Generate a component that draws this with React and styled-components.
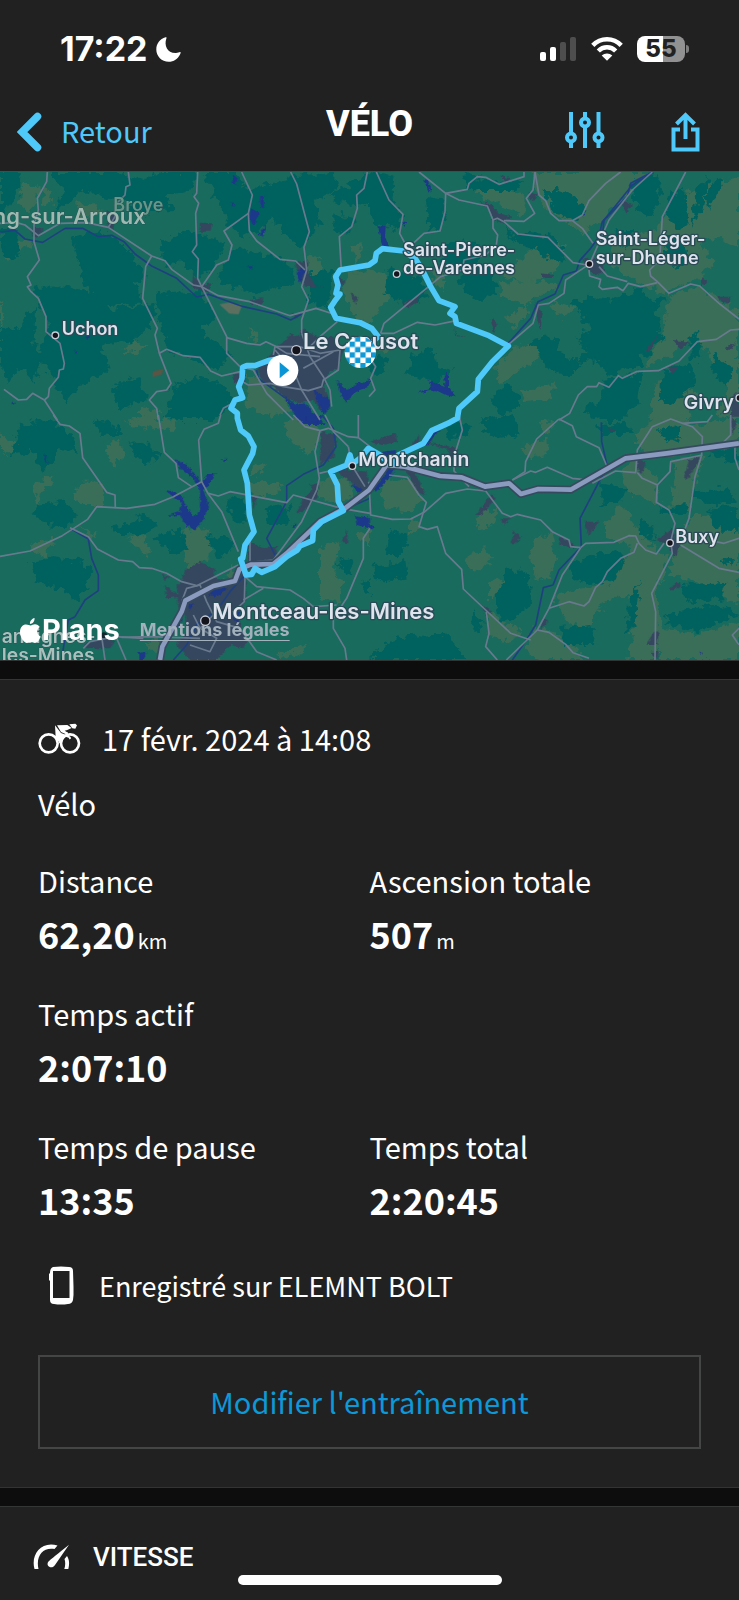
import React from "react";
import styled, { createGlobalStyle } from "styled-components";

const GlobalStyle = createGlobalStyle`
    * {
        box-sizing: border-box;
    }
    body {
        margin: 0;
        background-color: #212121;
        color: #ffffff;
        font-family: "Noto Sans CJK SC", "Noto Sans", sans-serif;
        font-size: 29px;
        line-height: 40px;
    }
`;

const Screen = styled.div`
    display: flex;
    flex-direction: column;
    min-height: 100vh;
`;

const StatusBar = styled.div`
    display: flex;
    justify-content: space-between;
    align-items: center;
    padding: 29px 50px 23px 60px;
`;

const StatusGroup = styled.div`
    display: flex;
    align-items: center;
    gap: ${(props) => props.$gap};
`;

const Clock = styled.span`
    font-family: Inter, sans-serif;
    font-size: 34px;
    font-weight: 700;
`;

const Battery = styled.div`
    display: flex;
    align-items: center;
    gap: 1px;
    &::after {
        content: "";
        width: 3px;
        height: 8px;
        border-radius: 0 3px 3px 0;
        background-color: #7d7d7d;
    }
`;

const BatteryLevel = styled.div`
    width: 48px;
    border-radius: 8px;
    background: linear-gradient(to right, #ffffff 55%, #919191 55%);
    color: #212121;
    font-family: Inter, sans-serif;
    font-size: 24px;
    font-weight: 800;
    line-height: 26px;
    text-align: center;
`;

const NavBar = styled.header`
    display: grid;
    grid-template-columns: 1fr auto 1fr;
    align-items: center;
    height: 80px;
    border-bottom: 1px solid #4a4a4a;
`;

const BackButton = styled.button`
    display: flex;
    align-items: flex-start;
    gap: 18px;
    padding: 0 0 0 17px;
    border: none;
    background: none;
    color: #4fc9fa;
    font-family: inherit;
    font-size: inherit;
    line-height: 36px;
    cursor: pointer;
`;

const PageTitle = styled.h1`
    margin: 0;
    padding-bottom: 16px;
    font-family: Roboto, sans-serif;
    font-size: 36px;
    font-weight: 800;
    line-height: 44px;
`;

const NavActions = styled.div`
    display: flex;
    justify-content: flex-end;
    gap: 65px;
    padding-right: 39px;
`;

const IconButton = styled.button`
    display: flex;
    padding: 0;
    border: none;
    background: none;
    color: #4fc9fa;
    cursor: pointer;
`;

const MapContainer = styled.div`
    position: relative;
    overflow: hidden;
    background-color: #196b5e;
`;

const MapDrawing = styled.svg`
    display: block;
    width: 100%;
    height: auto;
`;

const labelSizes = { small: "54px", medium: "58px", large: "66px" };

const PlaceLabel = styled.text`
    font-family: Inter, sans-serif;
    font-size: ${(props) => labelSizes[props.$size]};
    font-weight: 600;
    fill: ${(props) => props.$color || "#dfe3ee"};
    stroke: #2a4a55;
    stroke-width: ${(props) => (props.$color ? "2px" : "8px")};
    stroke-linejoin: round;
    paint-order: stroke;
`;

const MapCredits = styled.div`
    position: absolute;
    left: 20px;
    bottom: 12px;
    display: flex;
    align-items: center;
    gap: 20px;
    font-family: Inter, sans-serif;
`;

const MapBrand = styled.span`
    display: flex;
    align-items: center;
    gap: 1px;
    font-size: 29px;
    font-weight: 700;
    line-height: 36px;
`;

const LegalLink = styled.a`
    color: #a3b1bd;
    font-size: 18px;
    font-weight: 700;
    line-height: 24px;
    text-underline-offset: 4px;
`;

const Separator = styled.div`
    height: 20px;
    border-top: 1px solid #333333;
    border-bottom: 1px solid #333635;
    background-color: #0d0d0d;
`;

const Summary = styled.main`
    display: flex;
    flex-direction: column;
    padding: 38px;
`;

const WorkoutDate = styled.div`
    display: flex;
    align-items: center;
    gap: 21px;
`;

const WorkoutName = styled.div`
    margin-top: 25px;
`;

const StatGrid = styled.dl`
    display: grid;
    grid-template-columns: 1fr 1fr;
    row-gap: 34px;
    margin: 37px 0 41px;
`;

const StatItem = styled.div`
    grid-column-end: ${(props) => (props.$wide ? "span 2" : "auto")};
`;

const StatLabel = styled.dt`
    padding-bottom: 7px;
`;

const StatValue = styled.dd`
    margin: 0;
    font-size: 36px;
    font-weight: 700;
    line-height: 52px;
`;

const Unit = styled.span`
    padding-left: 3px;
    font-size: 20px;
    font-weight: 400;
    line-height: 20px;
`;

const Device = styled.div`
    display: flex;
    align-items: center;
    gap: 24px;
    padding-left: 10px;
    font-size: 27px;
`;

const EditButton = styled.button`
    margin-top: 49px;
    height: 94px;
    padding-bottom: 4px;
    border: 2px solid #434645;
    background: none;
    color: #0d98d8;
    font-family: inherit;
    font-size: inherit;
    cursor: pointer;
`;

const SpeedSection = styled.section`
    display: flex;
    align-items: center;
    gap: 23px;
    padding: 28px 33px 22px;
`;

const SectionTitle = styled.h2`
    margin: 0;
    font-family: Roboto, sans-serif;
    font-size: 26px;
    font-weight: 500;
    line-height: 44px;
`;

const HomeIndicator = styled.div`
    position: fixed;
    bottom: 15px;
    left: 50%;
    width: 264px;
    height: 10px;
    margin-left: -132px;
    border-radius: 5px;
    background-color: #ffffff;
`;

// The map is split in four tiles, each one has its own origin
const tiles = [
    {
        x: 0,
        y: 0,
        forest: [
            "150,6 330,6 420,30 480,6 590,6 580,60 500,80 520,120 420,130 370,90 300,80 250,60 160,130 190,60",
            "215,200 300,180 350,210 420,280 440,330 400,340 430,400 300,410 250,330 230,270",
            "0,170 60,180 50,270 10,260",
            "100,350 200,350 300,380 330,420 470,400 450,470 390,520 300,520 330,600 250,640 200,700 150,610 110,560 150,460",
            "0,470 60,480 110,400 100,520 130,560 100,640 60,590 20,640 0,560",
            "610,6 720,6 740,60 870,20 1000,6 1010,60 940,90 960,160 900,240 860,200 820,150 780,180 740,200 690,170 650,90",
            "470,370 600,360 650,440 600,480 650,520 700,560 630,600 570,560 500,540 480,460",
            "560,180 620,200 680,220 640,300 600,320 540,280 500,290 480,220",
            "930,310 1000,300 980,410 930,400",
            "700,230 860,270 880,340 760,370 650,330",
            "520,650 600,620 680,650 700,700 640,750 500,750",
            "0,6 60,6 50,80 0,130",
            "1000,130 1070,150 1050,190 1000,180",
            "980,80 1110,6 1110,90 1060,110",
            "330,650 420,620 440,690 360,720",
        ],
        field: [
            "65,40 120,50 110,90 90,130 60,100",
            "130,60 160,70 150,110 125,100",
            "230,100 290,100 300,130 240,150",
            "10,225 100,210 90,235 40,235 20,280",
            "160,510 190,525 185,575 155,560",
            "360,550 400,515 440,520 420,545",
            "710,290 740,260 745,300",
            "755,470 785,500 750,510",
            "930,250 970,280 960,310 990,335 945,340 920,300",
            "1060,230 1085,225 1080,280 1060,260",
            "1040,310 1110,300 1110,460 1070,450 1030,370",
            "740,610 770,630 850,640 870,720 820,740 740,710",
            "420,710 480,720 460,750 420,745",
            "0,380 15,430 0,480",
            "245,6 300,6 290,25",
        ],
        town: [
            "95,170 130,175 115,205 95,195",
            "600,158 635,160 632,185 598,185",
            "580,310 600,345 635,340 620,370 575,350",
            "750,390 790,385 785,405 755,405",
            "885,280 920,270 925,310 945,345 970,352 915,350 900,320",
            "320,120 345,130 340,180 325,175",
            "770,590 800,570 830,530 860,510 870,490 900,500 905,475 950,500 1000,500 1030,540 1015,590 985,610 970,650 990,700 960,720 940,690 900,700 850,680 820,650 790,640",
            "695,610 735,615 735,640 705,640",
            "1050,365 1075,385 1065,402",
            "1005,320 1035,330 1020,360",
            "870,430 905,425 890,445",
        ],
        water: [
            "700,15 713,25 708,45 697,38",
            "752,115 780,130 762,165 748,150",
            "780,80 790,80 792,115 780,110",
            "775,195 797,165 797,180 786,202",
            "692,95 705,103 700,110",
            "890,310 905,295 915,300 900,340",
            "255,495 270,498 265,510",
            "223,540 233,547 227,553",
            "35,692 44,700 38,706",
            "742,290 757,288 752,300",
            "850,675 885,705 915,700 930,718 960,745 975,765 910,765 885,735 865,705",
            "940,660 965,675 990,690 990,710 970,735 955,700",
            "1010,630 1040,660 1075,640 1110,630 1105,650 1060,670 1040,698 1025,680",
        ],
        river: [
            "0,186 45,181 75,207 128,217 195,175 248,175 295,200 335,196 372,215 405,252 455,288 530,325 590,381 625,373 730,410 830,432 872,450 905,432",
            "770,600 775,625 850,680 880,700",
        ],
        road: [
            "0,160 50,158 75,165 115,197 180,160 260,158 325,172 455,258 495,272 515,298 580,345 605,350 655,377 745,394 870,437 948,415 1000,432",
            "142,6 140,35 112,85 115,120 102,165 102,215 118,270 82,320 93,345 82,350 93,365 115,385 138,440 138,485 180,520 193,580 190,597 178,600 175,622 148,655 145,680 133,690",
            "385,6 390,45 378,50 375,75 345,105 345,140 325,172",
            "593,6 590,70 582,80 596,100 587,130 590,225 577,245 595,267 593,325 605,350",
            "725,6 757,75 745,130 672,183 696,225 685,270 650,285 605,350 680,500 680,550 720,590",
            "745,130 748,182 770,213 840,268 887,273 915,300",
            "872,6 890,42 928,185 912,232 920,300 905,350 925,390 905,450 905,490",
            "1102,6 1092,55 1070,75 1072,115 1055,170 1018,200 1024,300",
            "455,258 437,290 428,385 472,475 465,495 478,550 513,640 500,660 470,665 448,690 470,715 475,750",
            "478,550 500,538 550,557 600,562 632,603 665,618 720,605",
            "680,503 740,520 780,525 798,515 825,528 860,550 960,560",
            "12,658 55,690 80,688 98,670 133,690 172,750",
            "1012,455 960,500 930,530",
            "820,555 825,530 900,530 960,550 1020,540 1015,600 970,630 965,650 925,662 850,650 810,640 745,645 718,630",
            "905,490 930,560 970,620 990,660 995,710",
            "720,590 760,600 800,670 880,750",
            "825,540 880,600 905,660 960,750",
            "1000,545 910,595",
            "728,683 670,715 660,735",
        ],
    },
    {
        x: 1107,
        y: 0,
        forest: [
            "0,6 80,20 70,80 100,130 80,180 20,160 0,120",
            "170,80 230,90 220,170 180,190",
            "280,6 380,40 460,30 440,60 360,60 300,60",
            "390,130 430,190 540,195 600,260 560,280 500,240 430,210",
            "520,60 560,130 620,150 650,120 620,80 560,60",
            "240,210 330,220 330,280 270,300 220,270",
            "60,290 160,330 180,380 100,400 50,370",
            "300,280 370,290 380,370 320,390 260,340",
            "660,380 740,390 760,370 790,380 800,350 850,390 890,380 850,430 880,440 870,490 890,510 850,520 850,560 810,560 820,600 760,590 720,620 690,580 620,570 650,540 620,500 660,480 640,430 600,400",
            "490,510 560,500 570,540 640,580 600,620 540,600 510,560",
            "700,630 820,610 810,700 750,750 690,750 640,720 700,690",
            "780,40 860,10 880,50 850,140 810,130",
            "900,80 940,50 960,150 930,180 890,140",
            "980,60 1020,20 1000,120 970,170",
            "1040,20 1060,40 1020,120 1010,80",
            "900,200 950,210 960,270 920,300 890,250",
            "880,600 960,580 980,640 920,700 870,690",
            "1040,550 1090,600 1070,650 1030,610",
            "130,560 190,530 210,590 250,600 200,640 110,610",
            "360,680 420,640 460,700 400,740",
            "0,540 50,570 40,620 0,600",
            "740,180 790,180 780,240 740,210",
            "960,500 990,480 1000,550 970,580",
        ],
        field: [
            "490,6 850,6 800,60 740,100 700,160 640,190 590,150 530,120 500,60",
            "340,50 420,60 470,90 460,140 380,100 320,70",
            "520,200 590,230 560,300 480,340 400,320 460,260",
            "390,340 500,330 570,350 470,400 400,380",
            "720,210 860,180 900,110 960,60 1110,20 1110,240 1050,200 990,220 1040,280 980,330 880,370 790,330 730,290",
            "900,380 990,350 1110,430 1110,740 1040,740 1080,660 1010,540 960,510 900,560 830,590 880,500",
            "860,640 940,620 990,680 960,750 840,750",
            "430,540 530,500 500,570 450,600 390,640 380,590",
            "0,300 50,310 60,370 20,440 0,460",
            "180,300 230,310 220,360 200,340",
            "710,490 780,470 790,530 740,540",
            "550,400 620,410 590,440 560,430",
            "410,450 470,400 480,430 440,470",
            "30,530 70,520 60,550",
            "460,660 560,640 540,690 470,700",
        ],
        town: [
            "330,95 370,105 390,130 430,140 400,158 370,150 365,120",
            "395,15 420,25 415,38",
            "480,65 505,75 495,90 478,85",
            "640,265 700,270 705,305 680,315 650,290",
            "765,90 790,105 772,130 762,110",
            "515,310 553,315 548,325 520,322",
            "500,400 520,430 515,480 505,450",
            "365,445 385,460 375,488",
            "255,470 265,495 295,503 262,498",
            "1000,325 1015,335 995,350",
            "1045,380 1090,380 1080,400 1055,395",
            "910,510 965,515 935,540",
            "895,590 928,590 912,612",
            "1090,680 1110,660 1110,740 1085,740",
            "100,400 155,375 145,395 115,415",
            "825,550 865,495 850,535",
            "1065,535 1100,520 1085,540",
        ],
        water: [
            "165,28 178,30 185,68 172,50",
            "27,165 50,170 48,200 60,232 40,230",
            "98,155 112,160 105,168",
            "145,670 190,650 175,630 225,650 228,612 240,618 240,655 262,682 230,675 200,660",
            "640,130 650,138 642,142",
            "0,630 10,625 0,640",
        ],
        river: [
            "850,6 785,40 775,80 700,155 690,200 665,235 632,272 622,303 583,315 558,372 507,395 485,445 418,520",
            "845,12 790,45 705,150 702,180",
        ],
        road: [
            "22,6 60,90 102,133 92,190 108,220",
            "150,6 230,70 270,90 355,108 372,150 385,145 405,155 447,192 537,202 612,278 655,285",
            "230,70 228,125 213,183 165,190 135,218",
            "230,70 295,58 300,40 325,20 350,22 390,43 465,20 465,6",
            "498,6 492,60 472,85 497,130 465,154 405,152",
            "498,6 510,75 530,92 545,130 570,152 610,152 640,175 672,220",
            "755,6 710,40 660,92 640,135 610,152",
            "850,6 790,60 720,150 665,275 650,290 590,330 585,370 540,400 508,405 492,460 420,522",
            "950,6 880,140 872,270 842,300 845,318 865,335 900,370 965,342 992,348 1050,400 1110,447",
            "660,300 662,318 695,328 690,350 700,358 745,352 762,362 778,340 815,350 865,338",
            "690,290 715,318 775,335",
            "372,150 372,175 386,195 382,225 350,255 285,270 280,300 215,320 45,460 35,490",
            "35,490 75,490 145,457 198,465 262,452",
            "1110,478 1085,480 1042,508 985,515 930,573 868,602 805,604 760,625 748,617 720,652 690,638 683,650 655,650 628,675 602,730 570,750",
            "0,560 20,590 5,625 18,660 0,680",
        ],
    },
    {
        x: 0,
        y: 735,
        forest: [
            "60,30 150,10 220,70 240,110 180,100 130,170 100,110 30,120",
            "110,270 190,260 230,300 200,340 150,330 100,300",
            "90,440 160,430 250,440 280,470 230,560 180,520 110,500",
            "340,340 440,300 480,330 430,360 360,360",
            "460,370 540,340 570,400 520,420",
            "380,90 440,80 480,120 440,150",
            "620,360 690,370 700,400 650,430",
            "680,260 730,250 740,310 700,320",
            "1010,440 1050,430 1060,480 1030,470",
            "1080,500 1110,490 1110,540",
            "280,10 350,30 370,60 310,60",
            "800,280 870,270 860,330 800,320",
        ],
        field: [
            "0,60 50,80 20,120 0,100",
            "310,90 360,80 370,110 350,150 330,140",
            "215,230 250,200 310,200 310,270 270,270 240,270",
            "100,210 160,180 150,210 110,240 130,300 100,260",
            "370,20 440,10 530,20 520,45 440,40",
            "550,350 610,340 640,370 620,440 560,470",
            "385,370 420,360 460,410 440,420",
            "95,390 160,370 140,430 100,410",
            "850,40 870,10 950,20 960,60 930,120 880,90",
            "740,200 850,205 830,240 780,240 740,230",
            "760,150 800,145 770,180 745,195",
            "960,200 1040,180 1060,230 1040,260 950,255",
            "960,400 1020,380 1000,480 1030,500 1020,560 960,550",
            "580,710 640,700 660,735 570,735",
            "830,715 930,695 900,715 840,730",
            "440,690 480,660 480,730",
            "230,340 290,350 280,370",
            "670,490 700,450 700,490",
            "1070,360 1110,340 1110,400",
        ],
        town: [
            "530,510 545,495 555,465 600,440 645,465 640,490 690,500 700,490 735,475 740,540 730,570 715,600 725,640 740,680 730,700 690,690 650,735 570,735 530,690 560,650 555,600 535,570",
            "495,510 540,545 500,550",
            "485,480 510,485 495,495",
            "745,380 790,400 830,395 830,430 800,435 745,445",
            "960,50 1010,60 1000,130 960,150",
            "1000,160 1060,165 1100,170 1110,230 1090,250 1050,200",
            "890,290 910,250 945,215 950,245 905,295",
            "250,690 310,665 345,680 330,700 260,700",
            "755,245 770,250 760,285",
            "1025,380 1040,345 1045,385",
            "930,210 955,205 950,240",
        ],
        water: [
            "525,132 560,150 605,205 620,180 648,175 625,210 610,225 628,275 605,320 585,347 550,320 540,300 500,303 540,290 545,265 500,230 505,222 545,245 560,280 580,305 600,290 600,225 580,190 545,165",
            "130,118 138,122 143,145 136,138",
            "665,133 680,131 673,138",
            "915,0 975,0 950,22 920,20",
            "625,540 650,515 680,520 650,545",
            "565,570 580,565 570,590",
            "875,335 890,328 885,342",
            "1065,300 1110,310 1110,340 1070,330",
            "1055,210 1075,215 1095,235 1070,230",
            "415,715 440,710 430,735 415,735",
            "690,600 720,590 715,625",
            "520,620 545,610 540,640",
        ],
        river: [
            "210,340 265,372 275,430 295,480 295,527 255,555 225,605 205,615 190,700 185,735",
            "965,0 1000,40 1008,95 970,150 910,178 860,212 860,260 800,370 825,420",
            "735,480 690,530 655,580 590,630 560,690 520,735",
            "1030,285 1110,250",
        ],
        road: [
            "160,0 180,28 208,33 240,55 248,128 320,232 345,240 346,280",
            "475,0 493,112 528,145 535,188 575,215",
            "662,0 655,25 612,43 596,75 605,200 625,237 665,290 715,410",
            "605,200 520,245 465,268 380,280 290,275 263,313 187,362 90,408 0,424",
            "210,338 265,365 292,402 355,435 398,440 418,458 455,460 500,475 545,500 590,512 715,450",
            "625,235 655,243 690,230 860,263 880,240 1025,280 1110,295",
            "750,450 750,370",
            "880,0 915,35 960,47 985,40 1045,65 1075,68",
            "960,47 945,110 958,190 950,225 905,320 850,395 820,435",
            "958,175 1000,165",
            "975,0 1000,50 1045,95",
            "1045,95 1055,150 1095,215",
            "1075,0 1075,68 1110,95",
            "735,485 770,515 870,525 910,550 940,575 1010,570",
            "735,485 733,560 700,590 640,600 600,640",
            "790,520 730,555",
            "545,560 560,520 600,510 620,560 650,620 720,640 770,710 830,735",
            "365,667 450,665 600,670",
            "305,665 315,735",
            "350,670 378,735",
            "250,700 270,680 345,665 430,670",
            "570,690 630,710 650,670 600,640 580,600",
            "1110,340 1090,370 1090,430 1040,550 1000,610 1000,640 1035,700 1040,735",
            "770,440 820,435 840,425",
        ],
    },
    {
        x: 1107,
        y: 735,
        forest: [
            "330,20 430,0 450,60 380,70",
            "680,30 770,20 790,60 700,60",
            "870,40 930,30 930,70 890,85",
            "1020,110 1110,90 1110,140 1060,130",
            "700,210 780,220 760,260 700,270",
            "970,230 1080,220 1100,260 1020,270 970,250",
            "1015,290 1070,270 1110,290 1110,350 1050,350",
            "60,350 120,360 100,420 50,420",
            "20,450 110,440 120,480 60,505 20,490",
            "380,540 420,460 470,470 490,560 440,610 390,620",
            "600,450 690,410 770,420 740,500 680,510 610,490",
            "940,510 1070,500 1060,550 1000,560 940,550",
            "890,600 970,580 1060,570 1110,600 1060,620 980,650 900,630",
            "130,650 180,670 200,650 250,670 290,735 0,735 40,690",
            "310,590 340,610 330,650 305,640",
            "570,640 670,630 680,690 590,690",
            "780,570 810,500 800,610 770,670",
            "870,280 950,270 950,300 880,300",
            "810,310 860,340 850,380 810,350",
            "230,20 310,30 300,60 240,70",
            "1060,440 1095,430 1090,460",
        ],
        field: [
            "40,200 120,190 170,220 130,290 50,280 30,240",
            "800,60 850,15 900,5 1000,30 1110,6 1110,90 1000,100 900,120 810,110",
            "790,120 860,190 870,270 780,230 760,180",
            "920,130 1010,120 970,220 960,290 910,270",
            "970,300 1010,300 1110,360 1110,570 980,500 900,480 920,400",
            "300,420 350,400 370,430 320,480 290,440",
            "500,370 550,350 560,420 540,500 500,480 480,430",
            "700,330 760,270 800,330 850,400 900,420 860,540 880,640 860,735 780,735 800,560 760,540 700,560 660,640 590,620 560,550 620,520 700,510 790,400 720,370",
            "360,500 410,490 390,540 360,560",
            "350,580 400,620 460,650 420,680 360,660",
            "490,640 560,650 610,690 650,735 510,735 470,700",
            "870,640 980,660 1110,620 1110,735 870,735",
            "340,290 390,280 370,330 320,340",
            "460,90 540,70 530,120 470,130",
            "510,20 560,20 530,55",
            "120,310 150,330 120,360",
        ],
        town: [
            "0,80 80,55 85,80 40,90",
            "125,95 150,60 150,95",
            "100,150 130,155 170,240 150,235",
            "160,80 270,100 255,135 235,105",
            "320,300 370,235 380,250 335,300",
            "395,310 425,310 405,330",
            "425,385 435,350 458,365 440,385",
            "570,370 600,375 620,400 570,390",
            "645,320 690,320 660,360",
            "805,130 830,140 820,180 805,165",
            "945,190 960,135 995,125 955,195",
            "860,375 910,340 920,380 935,390 915,430 900,390",
            "900,520 930,500 935,512 910,528",
            "340,570 370,590 350,600",
            "520,610 540,615 515,645",
            "855,650 870,645 865,690 830,690",
            "845,710 870,710 865,735",
            "720,40 740,45 725,50",
            "1085,10 1105,20 1090,60",
        ],
        water: [
            "40,110 80,105 85,150 60,190 20,230 10,220 50,180",
            "160,90 190,60 200,40 210,45 175,92",
            "0,330 20,335 0,345",
            "992,710 1003,712 998,720",
        ],
        river: [
            "697,22 698,80 715,155 690,200 633,310 637,395 570,465 552,510 523,518 500,630 472,675 430,735",
        ],
        road: [
            "270,0 280,45 255,125 255,168 300,215",
            "570,12 503,72 470,140 468,170 430,195",
            "570,12 610,32 622,65 690,98 712,150",
            "430,195 485,168 500,172 535,157 610,190 640,193",
            "670,205 740,168 800,173 805,105 850,35 905,12 940,25 970,35 1000,65 998,120 978,185 960,310 945,350",
            "940,25 1015,20 1030,0",
            "805,173 820,190 865,210 862,262 900,285 918,325 905,380 910,415 848,535 860,590 858,735",
            "865,210 903,170 905,140 1000,120",
            "0,200 5,300 70,313 125,312 165,292 230,235 295,222 350,228",
            "60,180 115,187 150,240 172,262 150,335 175,343 205,335 230,415 278,463 283,522 350,585 425,655 485,675",
            "350,228 400,295 425,305 445,298 515,315 550,350 600,375 605,395 635,398",
            "635,398 650,385 735,382 780,362 800,363 810,385 830,405 862,417 885,385",
            "635,398 580,480 540,580 505,645 412,735",
            "540,580 600,560 645,573 660,560 680,517 700,500 715,470 755,430 795,412 805,385",
            "505,645 540,652 590,688 612,713 660,730",
            "352,590 360,655 350,695 385,735",
            "935,390 1050,460 1110,472",
            "1040,380 1065,385 1110,370",
            "1110,640 1090,660 1110,690",
            "1098,90 1098,130 1110,165",
            "1085,0 1085,60 1060,85",
        ],
    },
];

const motorway =
    "480,1470 487,1430 545,1325 556,1292 640,1248 705,1233 718,1198 752,1184 820,1182 860,1150 960,1055 1035,1015 1107,960 1160,885 1215,890 1320,918 1385,922 1455,950 1527,940 1563,972 1615,957 1712,959 1877,865 2000,850 2217,820";

const route =
    "848,565 805,572 765,587 740,587 728,592 726,625 716,650 728,683 705,690 693,715 712,730 712,745 722,780 745,798 762,830 758,850 732,900 742,940 748,1035 762,1085 735,1125 728,1165 722,1167 738,1215 755,1213 765,1195 785,1207 825,1190 860,1160 892,1140 900,1128 938,1112 940,1080 965,1055 1030,1022 1015,995 1012,945 992,905 1040,885 1050,855 1057,882 1080,865 1105,835 1140,855 1175,885 1195,855 1270,820 1295,782 1350,757 1372,745 1377,715 1432,665 1435,628 1477,575 1525,528 1467,497 1369,460 1365,440 1350,430 1365,410 1317,392 1292,350 1267,300 1247,268 1212,243 1147,236 1129,250 1125,272 1107,285 1020,300 1007,320 1014,345 1008,370 1020,372 1003,395 992,412 1008,445 1080,458 1115,475 1135,500 1100,530";

const places = [
    { name: "Uchon", x: 185, y: 495, dot: [166, 496] },
    { name: "Le Creusot", x: 909, y: 536, dot: [889, 541], size: "large" },
    { name: "Saint-Pierre-", x: 1209, y: 258, dot: [1190, 312] },
    { name: "de-Varennes", x: 1209, y: 312 },
    { name: "Saint-Léger-", x: 1787, y: 225, dot: [1768, 282] },
    { name: "sur-Dheune", x: 1787, y: 283 },
    { name: "Givry", x: 2051, y: 716, dot: [2218, 684], size: "medium" },
    { name: "Montchanin", x: 1075, y: 887, dot: [1057, 888], size: "medium" },
    { name: "Buxy", x: 2026, y: 1119, dot: [2010, 1119] },
    { name: "Montceau-les-Mines", x: 637, y: 1347, dot: [616, 1352], size: "large" },
    { name: "ng-sur-Arroux", x: -22, y: 162, size: "large", color: "#9fb9b0" },
    { name: "Broye", x: 340, y: 124, color: "#669788" },
    { name: "anvignes-", x: 5, y: 1418, size: "medium", color: "#a9c0bd" },
    { name: "les-Mines", x: 5, y: 1476, size: "medium", color: "#a9c0bd" },
];

const Shapes = ({ items, fill }) => (
    <g fill={fill}>
        {items.map((points) => <polygon key={points} points={points} />)}
    </g>
);

const Lines = ({ items, color, width }) => (
    <g fill="none" stroke={color} strokeWidth={width} strokeLinejoin="round">
        {items.map((points) => <polyline key={points} points={points} />)}
    </g>
);

const RouteMap = () => (
    <MapDrawing viewBox="0 6 2217 1464" role="img" aria-label="Carte du parcours">
        <defs>
            <filter id="ragged" x="0" y="0" width="100%" height="100%">
                <feTurbulence type="fractalNoise" baseFrequency="0.045" numOctaves="3" seed="4" />
                <feDisplacementMap in="SourceGraphic" scale="40" xChannelSelector="R" yChannelSelector="G" />
            </filter>
            <filter id="rough" x="0" y="0" width="100%" height="100%">
                <feTurbulence type="fractalNoise" baseFrequency="0.09" numOctaves="2" seed="9" />
                <feDisplacementMap in="SourceGraphic" scale="14" xChannelSelector="R" yChannelSelector="G" />
            </filter>
            <pattern id="checker" x="1081" y="547" width="32" height="32" patternUnits="userSpaceOnUse">
                <rect width="32" height="32" fill="#ffffff" />
                <path d="M0 0h16v16H0zM16 16h16v16H16z" fill="#1199d6" />
            </pattern>
        </defs>
        <rect y="6" width="2217" height="1464" fill="#196b5e" />
        <g filter="url(#ragged)">
            {tiles.map(({ x, y, forest, field }) => (
                <g key={`${x}-${y}`} transform={`translate(${x} ${y})`}>
                    <Shapes items={field} fill="#3a6e58" />
                    <Shapes items={forest} fill="#00625f" />
                </g>
            ))}
        </g>
        <path d="M658 403l30-6 38 8-10 28-28-2z" fill="#5d7060" />
        <path d="M458 605l32-9-4 17-28 9z" fill="#5a5545" />
        <g filter="url(#rough)">
            {tiles.map(({ x, y, town, water }) => (
                <g key={`${x}-${y}`} transform={`translate(${x} ${y})`}>
                    <Shapes items={town} fill="#36475e" />
                    <Shapes items={water} fill="#1f378a" />
                </g>
            ))}
        </g>
        {tiles.map(({ x, y, river, road }) => (
            <g key={`${x}-${y}`} transform={`translate(${x} ${y})`}>
                <Lines items={river} color="#1f4080" width="5" />
                <Lines items={road} color="#697a8e" width="5" />
            </g>
        ))}
        <Lines items={[motorway]} color="#364a5e" width="24" />
        <Lines items={[motorway]} color="#8b9abf" width="14" />
        <Lines items={[route]} color="#4fc9fa" width="17" />
        {places.filter((place) => place.dot).map(({ name, dot, size }) => (
            <circle key={name} cx={dot[0]} cy={dot[1]} r={size === "large" ? 14 : 10} fill="#14141c" stroke="#c9ccd6" strokeWidth="4" />
        ))}
        <circle cx="312" cy="1396" r="9" fill="#14242c" />
        {places.map(({ name, x, y, size = "small", color }) => (
            <PlaceLabel key={name} x={x} y={y} $size={size} $color={color}>{name}</PlaceLabel>
        ))}
        <circle cx="1081" cy="547" r="47" fill="url(#checker)" />
        <circle cx="848" cy="601" r="47" fill="#ffffff" />
        <path d="M839 577l29 24-29 24z" fill="#0a96d6" />
    </MapDrawing>
);

const MoonIcon = () => (
    <svg width="25" height="25" viewBox="0 0 25 25" fill="#ffffff" aria-hidden="true">
        <path d="M9.5.3C10.7 0 10.7.8 10.3 1.7C8 8 11 16.300 20 16C22 16 23.200 14.800 24.300 15C25 15.300 24.500 16.400 24 17.400C21.900 21.900 17.700 24.700 12.700 24.700C5.700 24.700.3 19.300.3 12.500C.3 6.800 4 1.800 9.500.3Z" />
    </svg>
);

const SignalIcon = () => (
    <svg width="37" height="24" viewBox="0 0 37 24" fill="#ffffff" aria-hidden="true">
        <rect x="0" y="15" width="6" height="9" rx="2" />
        <rect x="10" y="10" width="6" height="14" rx="2" />
        <rect x="20" y="5" width="6" height="19" rx="2" fill="#4e4e4e" />
        <rect x="30" y="0" width="6" height="24" rx="2" fill="#4e4e4e" />
    </svg>
);

const WifiIcon = () => (
    <svg width="32" height="24" viewBox="0 0 32 24" aria-hidden="true">
        <path d="M1.800 8.400C9.700.2 22.300.2 30.200 8.400" fill="none" stroke="#ffffff" strokeWidth="4.500" />
        <path d="M7.300 14C12.200 9 19.800 9 24.700 14" fill="none" stroke="#ffffff" strokeWidth="4.500" />
        <path d="M10.700 18.400C13.700 15.700 18.300 15.700 21.300 18.400L16 23.800Z" fill="#ffffff" />
    </svg>
);

const BackIcon = () => (
    <svg width="26" height="40" viewBox="0 0 26 40" aria-hidden="true">
        <path d="M20.500 4.500L5 20L20.500 35.500" fill="none" stroke="currentColor" strokeWidth="7.500" strokeLinecap="round" />
    </svg>
);

const SlidersIcon = () => (
    <svg width="40" height="36" viewBox="0 0 40 36" fill="none" stroke="currentColor" strokeWidth="4" aria-hidden="true">
        <path d="M6 0V22M6 30V36M20 0V6M20 14V36M33.500 0V22M33.500 30V36" />
        <circle cx="6" cy="25.500" r="4" />
        <circle cx="20" cy="10.500" r="4" />
        <circle cx="33.500" cy="25.500" r="4" />
    </svg>
);

const ShareIcon = () => (
    <svg width="30" height="40" viewBox="0 0 30 40" fill="none" stroke="currentColor" strokeWidth="4" aria-hidden="true">
        <path d="M10 17.500H3.500V37.500H27.500V17.500H21" />
        <path d="M15.500 27V4M6.500 12L15.500 3L24.500 12" />
    </svg>
);

const BikeIcon = () => (
    <svg width="43" height="31" viewBox="117 130 129 93" aria-hidden="true">
        <circle cx="149" cy="191" r="27" fill="none" stroke="#ffffff" strokeWidth="8" />
        <circle cx="213" cy="191" r="27" fill="none" stroke="#ffffff" strokeWidth="8" />
        <path d="M168 137L186 160L200 165L187 183L172 186L170 172Z" fill="#ffffff" />
        <path d="M174 137L205 136L218 145L205 151L197 153L207 159L201 164L186 157Z" fill="#ffffff" />
        <path d="M211 134L229 132L234 137L229 147L220 146Z" fill="#ffffff" />
        <path d="M180 189L199 168L215 174M202 158L214 178" fill="none" stroke="#ffffff" strokeWidth="5" />
    </svg>
);

const DeviceIcon = () => (
    <svg width="27" height="40" viewBox="0 0 27 40" aria-hidden="true">
        <path
            d="M5 1Q13 0 21 1Q25 1 25 5L25.500 21V29L25 34Q24 38 20 38Q13 39 6 38Q2 38 2 34V15L1 14V8L2 7Q2 2 5 1ZM5 5V32H21.500V5Z"
            fill="#ffffff"
            fillRule="evenodd"
        />
    </svg>
);

const GaugeIcon = () => (
    <svg width="37" height="26" viewBox="0 0 37 26" fill="#ffffff" aria-hidden="true">
        <path d="M1.500 25C-2.500 11 8-3.500 24.500 1.500L21.500 5C10 2.800 2.500 12 5.500 25Z" />
        <path d="M36 .8L22 21C19 26 12 22 15.500 17.500C17 16 26 9 36 .8Z" />
        <path d="M34 12L31.500 15C32.500 18 32.500 21.500 31.300 25H35.300C36.600 20.500 36.500 15.500 34 12Z" />
    </svg>
);

const stats = [
    { label: "Distance", value: "62,20", unit: "km" },
    { label: "Ascension totale", value: "507", unit: "m" },
    { label: "Temps actif", value: "2:07:10", wide: true },
    { label: "Temps de pause", value: "13:35" },
    { label: "Temps total", value: "2:20:45" },
];

const App = () => {
    return (
    <Screen>
        <GlobalStyle />
        <StatusBar>
            <StatusGroup $gap="9px">
                <Clock>17:22</Clock>
                <MoonIcon />
            </StatusGroup>
            <StatusGroup $gap="14px">
                <SignalIcon />
                <WifiIcon />
                <Battery><BatteryLevel>55</BatteryLevel></Battery>
            </StatusGroup>
        </StatusBar>
        <NavBar>
            <BackButton type="button"><BackIcon />Retour</BackButton>
            <PageTitle>VÉLO</PageTitle>
            <NavActions>
                <IconButton type="button" aria-label="Réglages"><SlidersIcon /></IconButton>
                <IconButton type="button" aria-label="Partager"><ShareIcon /></IconButton>
            </NavActions>
        </NavBar>
        <MapContainer>
            <RouteMap />
            <MapCredits>
                <MapBrand>
                    <svg width="21" height="25" viewBox="0 0 21 25" fill="#ffffff" aria-hidden="true">
                        <path d="M14.500 0C15 3 12.500 6 10 6C9.500 3.200 12 .5 14.500 0ZM10.500 7.500C12 7.500 13 6.300 15 6.300C17 6.300 18.800 7.500 19.800 9C16 11.300 16.500 16.700 20.700 18.500C19.500 21.500 17.500 25 15 25C13.500 25 12.800 24 11 24C9 24 8.500 25 7 25C4 25 0 19 0 14C0 9 3 6.500 6 6.500C8 6.500 9.500 7.500 10.500 7.500Z" />
                    </svg>
                    Plans
                </MapBrand>
                <LegalLink href="#legal">Mentions légales</LegalLink>
            </MapCredits>
        </MapContainer>
        <Separator />
        <Summary>
            <WorkoutDate><BikeIcon />17 févr. 2024 à 14:08</WorkoutDate>
            <WorkoutName>Vélo</WorkoutName>
            <StatGrid>
                {stats.map(({ label, value, unit, wide }) => (
                    <StatItem key={label} $wide={wide}>
                        <StatLabel>{label}</StatLabel>
                        <StatValue>{value}{unit && <Unit>{unit}</Unit>}</StatValue>
                    </StatItem>
                ))}
            </StatGrid>
            <Device><DeviceIcon />Enregistré sur ELEMNT BOLT</Device>
            <EditButton type="button">Modifier l'entraînement</EditButton>
        </Summary>
        <Separator />
        <SpeedSection>
            <GaugeIcon />
            <SectionTitle>VITESSE</SectionTitle>
        </SpeedSection>
        <HomeIndicator />
    </Screen>
    )
}

export default App;
